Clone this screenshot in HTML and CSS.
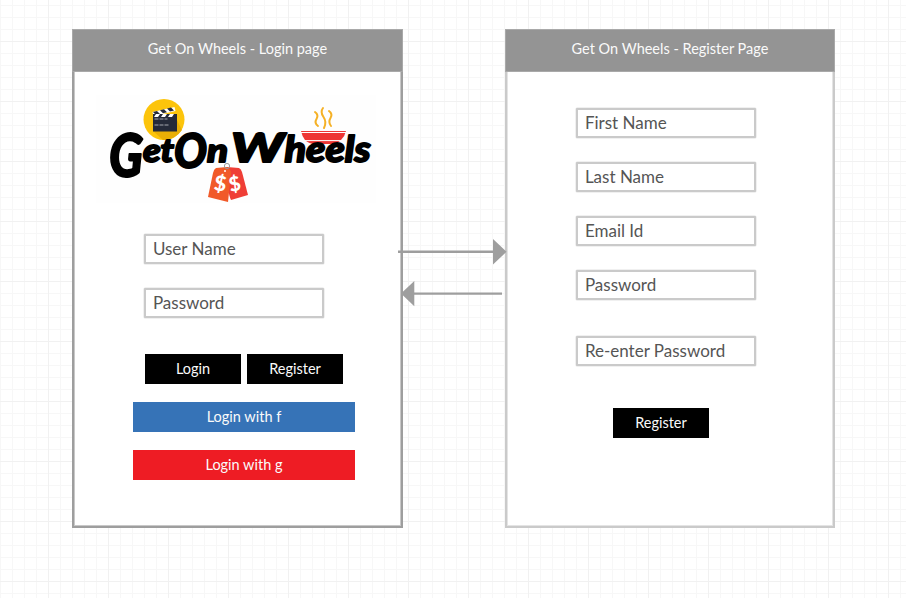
FILE: index.html
```html
<!DOCTYPE html>
<html lang="en">
<head>
<meta charset="utf-8">
<title>Get On Wheels</title>
<link rel="stylesheet" href="styles.css">
</head>
<body>
<main class="board">
  <section class="panel panel-login">
    <h1 class="panel-title">Get On Wheels - Login page</h1>
    <div class="panel-body">
      <svg class="logo" viewBox="96 95 280 108" role="img" aria-label="GetOnWheels">
        <circle cx="164" cy="119.500" r="20.500" fill="#fcc40b"/>
        <path d="M153 131l10 9q12 0 19-10l-5-10z" fill="#e9ae05"/>
        <path d="M153 116h24v15.500h-24z" fill="#252a39"/>
        <path d="M152.500 112l22-5 1 4-22 5z" fill="#fff"/>
        <path d="M153 112l4-1 3 3-4 1zM160 110.200l4-1 3 3-4 1zM167 108.600l4-1 3 3-4 1z" fill="#252a39"/>
        <path d="M153 114h24v3h-24z" fill="#fff"/>
        <path d="M153 114h3l-2 3h-1zM160 114h3l-2 3h-3zM167 114h3l-2 3h-3zM174 114h3v3h-5z" fill="#252a39"/>
        <path d="M154.500 119h13M154.500 125h15" stroke="#c6c8cd" stroke-width=".8" stroke-dasharray="4 1"/>
        <path d="M301 131h45q-1 5-5 9-4 4-10 4h-16q-6 0-10-4-3-4-4-9z" fill="#ee3634"/>
        <path d="M301 132.500h45M305 140.600h37" stroke="#fff" stroke-width="1"/>
        <path d="M315 112q4 3 1.500 7t1.500 7M323 108q-3 4 .5 9t.5 11M329 111q4 3 1.500 7t.5 8" fill="none" stroke="#f5b126" stroke-width="2" stroke-linecap="round"/>
        <text class="wordmark"><tspan x="109" y="177" font-size="60" textLength="34" lengthAdjust="spacingAndGlyphs">G</tspan><tspan x="143" y="161.500" font-size="33" textLength="31" lengthAdjust="spacingAndGlyphs">et</tspan><tspan x="174" y="167.500" font-size="48" textLength="33" lengthAdjust="spacingAndGlyphs">O</tspan><tspan x="207" y="161.500" font-size="33" textLength="21" lengthAdjust="spacingAndGlyphs">n</tspan><tspan x="231" y="161.500" font-size="40" textLength="53" lengthAdjust="spacingAndGlyphs">W</tspan><tspan x="284.500" y="161.500" font-size="36" textLength="86" lengthAdjust="spacingAndGlyphs">heels</tspan></text>
        <path d="M227 167l12 1q2 1 3 4l6 23-17 5q-4-8-4-33z" fill="#ef3e36"/>
        <path d="M216 168l11-1q4 2 4 6l-3 29-20-5 5-24q1-4 3-5z" fill="#f15a29"/>
        <circle cx="227" cy="166" r="2.600" fill="none" stroke="#999" stroke-width="1"/>
        <circle cx="225" cy="171" r="1" fill="#fff"/>
        <g class="price">
          <text x="214" y="191" font-size="21" transform="rotate(8 220 185)">$</text>
          <text x="229" y="191" font-size="20" transform="rotate(-12 235 184)">$</text>
        </g>
      </svg>
      <form class="login-form">
        <div class="field">User Name</div>
        <div class="field">Password</div>
      </form>
      <div class="button-row">
        <div class="button">Login</div>
        <div class="button">Register</div>
      </div>
      <div class="button button-wide facebook">Login with f</div>
      <div class="button button-wide google">Login with g</div>
    </div>
  </section>

  <section class="panel panel-register">
    <h1 class="panel-title">Get On Wheels - Register Page</h1>
    <div class="panel-body">
      <form class="register-form">
        <div class="field">First Name</div>
        <div class="field">Last Name</div>
        <div class="field">Email Id</div>
        <div class="field">Password</div>
        <div class="field field-confirm">Re-enter Password</div>
        <div class="button">Register</div>
      </form>
    </div>
  </section>

  <svg class="connectors" viewBox="398 238 110 70" aria-hidden="true">
    <path d="M398 251.800h96M414 293.600h88" stroke="#9e9e9e" stroke-width="2.400"/>
    <path d="M493 239l13.500 12.800L493 264.500zM414.300 281l-13.300 12.600 13.300 12.600z" fill="#9e9e9e"/>
  </svg>
</main>
</body>
</html>
```
FILE: styles.css
```css
* {
  box-sizing: border-box;
}

body {
  margin: 0;
  font-family: Lato, "Liberation Sans", sans-serif;
}

.board {
  position: relative;
  display: flex;
  gap: 102px;
  align-items: flex-start;
  height: 598px;
  padding: 29px 0 0 72px;
  overflow: hidden;
  background-color: #fff;
  background-image:
    linear-gradient(90deg, #f1f1f1 1px, transparent 1px),
    linear-gradient(#f1f1f1 1px, transparent 1px),
    linear-gradient(90deg, #f7f7f7 1px, transparent 1px),
    linear-gradient(#f7f7f7 1px, transparent 1px);
  background-size: 60px 60px, 60px 60px, 12px 12px, 12px 12px;
  background-position: 48px 0, 0 41px, 0 0, 0 5px;
}

.panel {
  width: 331px;
  height: 499px;
  background: #fff;
  border: 2px solid #9e9e9e;
  box-shadow: inset 0 0 0 1px #c8c8c8;
}

.panel-register {
  width: 330px;
  border-color: #cacaca;
  box-shadow: inset 0 0 0 1px #e4e4e4;
}

.panel-title {
  height: 43px;
  margin: -2px -2px 0;
  border: 1px solid #a9a9a9;
  background: #949494;
  color: #fafafa;
  font-size: 14.5px;
  font-weight: 400;
  line-height: 37px;
  text-align: center;
}

.panel-body {
  padding: 23px 0 0 22px;
}

.logo {
  display: block;
  width: 280px;
  height: 108px;
  background: #fefefe;
}

.wordmark {
  fill: #000;
  stroke: #000;
  stroke-width: 1.8;
  stroke-linejoin: round;
  font-weight: 900;
  font-style: italic;
}

.price {
  fill: #fff;
  font-weight: 900;
}

.login-form {
  display: grid;
  gap: 24px;
  padding: 31px 0 0 48.400px;
}

.field {
  width: 180px;
  height: 30px;
  padding-left: 6.500px;
  border: 2px solid #cacaca;
  box-shadow: 0 0 0 .5px #e2e2e2;
  border-radius: 1px;
  background: #fff;
  color: #555;
  font-size: 17px;
  line-height: 26px;
}

.button-row {
  display: flex;
  gap: 6px;
  padding: 36px 0 18px 49px;
}

.button {
  width: 96px;
  height: 30px;
  background: #000;
  color: #fafafa;
  font-size: 14.5px;
  line-height: 29px;
  text-align: center;
}

.button-wide {
  width: 222px;
  margin: 0 0 18px 37px;
}

.facebook {
  background: #3673b7;
}

.google {
  background: #ee1c24;
}

.register-form {
  display: grid;
  gap: 24px;
  padding: 13px 0 0 47.400px;
}

.field-confirm {
  margin-top: 12px;
}

.register-form .button {
  margin: 18px 0 0 36.600px;
}

.connectors {
  position: absolute;
  left: 398px;
  top: 238px;
  width: 110px;
  height: 70px;
}
```
